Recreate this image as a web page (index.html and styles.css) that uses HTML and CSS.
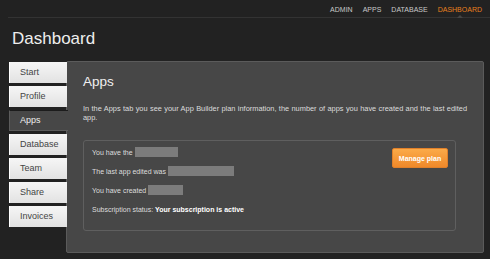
FILE: index.html
```html
<!DOCTYPE html>
<html lang="en">
<head>
  <meta charset="UTF-8">
  <title>Dashboard</title>
  <link rel="stylesheet" href="styles.css">
</head>
<body>

  <div class="topbar">
    <a href="#">ADMIN</a>
    <a href="#">APPS</a>
    <a href="#">DATABASE</a>
    <a href="#" class="current">DASHBOARD</a>
  </div>

  <h1>Dashboard</h1>

  <div class="main">
    <ul class="tabs">
      <li>Start</li>
      <li>Profile</li>
      <li class="active">Apps</li>
      <li>Database</li>
      <li>Team</li>
      <li>Share</li>
      <li>Invoices</li>
    </ul>

    <div class="panel">
      <h2>Apps</h2>
      <p class="intro">In the Apps tab you see your App Builder plan information, the number of apps you have created and the last edited app.</p>

      <div class="plan-box">
        <div class="plan-info">
          <div class="row">You have the <span class="blank w43"></span></div>
          <div class="row">The last app edited was <span class="blank w66"></span></div>
          <div class="row">You have created <span class="blank w35"></span></div>
          <div class="row">Subscription status: <b>Your subscription is active</b></div>
        </div>
        <button class="btn-plan">Manage plan</button>
      </div>
    </div>
  </div>

</body>
</html>
```

FILE: styles.css
```css
body {
  margin: 0;
  background-color: #222222;
  font-family: "Liberation Sans", Arial, sans-serif;
  color: #e0e0e0;
}

.topbar {
  margin-left: 8px;
  padding-right: 8px;
  border-bottom: 1px solid #333333;
  display: flex;
  justify-content: flex-end;
  gap: 10px;
  box-sizing: border-box;
  padding-top: 3px;
  height: 18px;
}

.topbar a {
  position: relative;
  font-size: 7px;
  line-height: 14px;
  color: #c8c8c8;
  text-decoration: none;
}

.topbar a.current {
  color: #e8801e;
}

.topbar a.current::after {
  content: "";
  position: absolute;
  left: 50%;
  bottom: -1px;
  margin-left: -3px;
  border-left: 3px solid transparent;
  border-right: 3px solid transparent;
  border-bottom: 3px solid #444444;
}

h1 {
  margin: 11px 0 0 12px;
  font-size: 17px;
  line-height: 20px;
  font-weight: normal;
  color: #eeeeee;
}

.main {
  display: flex;
  margin: 12px 0 0 9px;
}

.tabs {
  list-style: none;
  margin: 1px 0 0 0;
  padding: 0;
  width: 58px;
  position: relative;
  z-index: 1;
}

.tabs li {
  height: 21px;
  margin-bottom: 3px;
  padding-left: 10px;
  font-size: 9px;
  line-height: 21px;
  color: #444444;
  background: linear-gradient(#f6f6f6, #e2e2e2);
  border-left: 1px solid #ffffff;
  box-sizing: border-box;
}

.tabs li.active {
  background: #474747;
  color: #eeeeee;
  border: 1px solid #5c5c5c;
  border-right: none;
  border-top-color: #1c1c1c;
  margin-right: -1px;
  line-height: 19px;
}

.panel {
  width: 418px;
  height: 192px;
  margin-left: -1px;
  padding: 12px 16px 0 16px;
  box-sizing: border-box;
  background-color: #474747;
  border: 1px solid #5b5b5b;
  border-radius: 2px;
}

.panel h2 {
  margin: 0;
  font-size: 13.5px;
  line-height: 16px;
  font-weight: normal;
  color: #f0f0f0;
}

.intro {
  margin: 14px 0 0 0;
  font-size: 7.4px;
  line-height: 9px;
  text-align: justify;
  color: #dddddd;
}

.plan-box {
  display: flex;
  justify-content: space-between;
  margin: 18px 11px 0 0;
  height: 91px;
  box-sizing: border-box;
  padding: 6px 7px 0 8px;
  border: 1px solid #5f5f5f;
  border-radius: 3px;
}

.row {
  display: flex;
  align-items: center;
  height: 10px;
  margin-bottom: 9px;
  font-size: 7px;
  white-space: pre;
  color: #dddddd;
}

.row b {
  color: #ffffff;
}

.blank {
  display: inline-block;
  height: 10px;
  background-color: #7c7c7c;
}

.w43 { width: 43px; }
.w66 { width: 66px; }
.w35 { width: 35px; }

.btn-plan {
  margin-top: 1px;
  width: 56px;
  height: 20px;
  padding: 0;
  font-family: "Liberation Sans", Arial, sans-serif;
  font-size: 7px;
  font-weight: bold;
  color: #ffffff;
  background: linear-gradient(#fbaa48, #f0892a);
  border: 1px solid #e0802a;
  border-radius: 2px;
  cursor: pointer;
}
```
